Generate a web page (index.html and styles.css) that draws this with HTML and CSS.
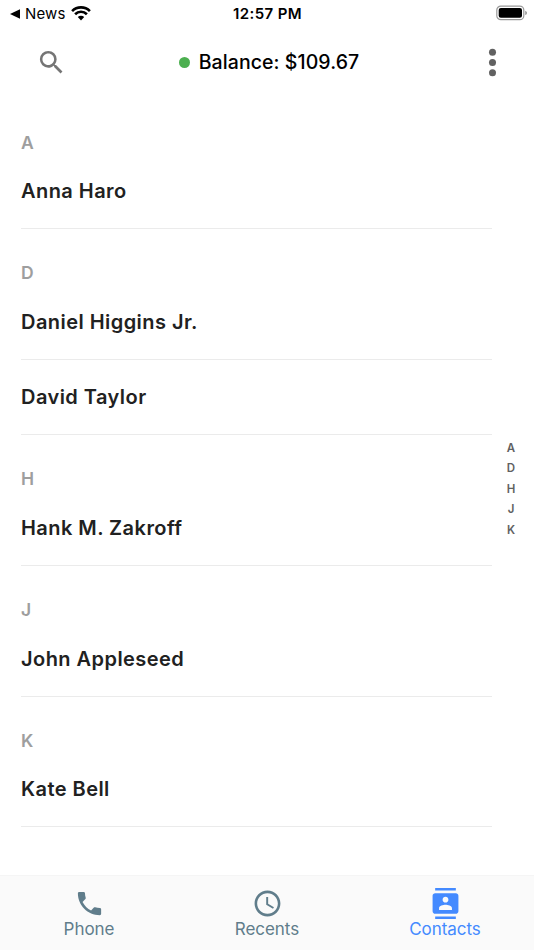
FILE: index.html
```html
<!DOCTYPE html>
<html lang="en">
<head>
<meta charset="utf-8">
<title>Contacts</title>
<link rel="stylesheet" href="styles.css">
</head>
<body>
<div class="app">
  <div class="status">
    <div class="status-left">
      <svg class="back" viewBox="0 0 10 10"><path d="M0 5 10 .3v9.4z"/></svg>
      <span class="news">News</span>
      <svg class="wifi" viewBox="0 0 20 15"><path d="M10 14.4 6.8 11.1a4.6 4.6 0 0 1 6.4 0z"/><path class="arc" d="M4.1 8.2a8.4 8.4 0 0 1 11.8 0M1.1 5.1a12.6 12.6 0 0 1 17.8 0"/></svg>
    </div>
    <span class="time">12:57 PM</span>
    <svg class="battery" viewBox="0 0 32 16"><rect class="shell" x=".8" y="1.1" width="27" height="13.6" rx="4"/><rect x="2.7" y="3" width="23.3" height="9.8" rx="2.1"/><path class="cap" d="M29.2 5.7c2.4.8 2.4 3.6 0 4.4z"/></svg>
  </div>
  <header class="top">
    <svg class="search" viewBox="0 0 24 24"><path d="M15.5 14h-.79l-.28-.27A6.471 6.471 0 0 0 16 9.5 6.5 6.5 0 1 0 9.5 16c1.61 0 3.09-.59 4.23-1.57l.27.28v.79l5 4.99L20.49 19l-4.99-5zm-6 0C7.01 14 5 11.99 5 9.5S7.01 5 9.5 5 14 7.01 14 9.5 11.99 14 9.5 14z"/></svg>
    <div class="balance"><i class="dot"></i><span class="amount">Balance: $109.67</span></div>
    <svg class="more" viewBox="0 0 24 24"><circle cx="12" cy="6" r="2.05"/><circle cx="12" cy="12" r="2.05"/><circle cx="12" cy="18" r="2.05"/></svg>
  </header>
  <main class="body">
    <div class="list">
      <section><h2>A</h2><div class="row"><span>Anna Haro</span></div></section>
      <section><h2>D</h2><div class="row"><span>Daniel Higgins Jr.</span></div><div class="row"><span>David Taylor</span></div></section>
      <section><h2>H</h2><div class="row"><span>Hank M. Zakroff</span></div></section>
      <section><h2>J</h2><div class="row"><span>John Appleseed</span></div></section>
      <section><h2>K</h2><div class="row"><span>Kate Bell</span></div></section>
    </div>
    <nav class="index"><span>A</span><span>D</span><span>H</span><span>J</span><span>K</span></nav>
  </main>
  <footer class="tabs">
    <div class="tab"><svg viewBox="0 0 24 24"><path d="M6.62 10.79c1.44 2.83 3.76 5.14 6.59 6.59l2.2-2.2c.27-.27.67-.36 1.02-.24 1.12.37 2.33.57 3.57.57.55 0 1 .45 1 1V20c0 .55-.45 1-1 1-9.39 0-17-7.61-17-17 0-.55.45-1 1-1h3.5c.55 0 1 .45 1 1 0 1.25.2 2.45.57 3.57.11.35.03.74-.25 1.02l-2.2 2.2z"/></svg><span>Phone</span></div>
    <div class="tab"><svg viewBox="0 0 24 24"><path d="M11.99 2C6.47 2 2 6.48 2 12s4.47 10 9.99 10C17.52 22 22 17.52 22 12S17.52 2 11.99 2zM12 20c-4.42 0-8-3.58-8-8s3.58-8 8-8 8 3.58 8 8-3.58 8-8 8zm.5-13H11v6l5.25 3.15.75-1.23-4.5-2.67z"/></svg><span>Recents</span></div>
    <div class="tab active"><svg viewBox="0 0 24 24"><path d="M20 0H4v2h16V0zM4 24h16v-2H4v2zM20 4H4c-1.1 0-2 .9-2 2v12c0 1.1.9 2 2 2h16c1.1 0 2-.9 2-2V6c0-1.1-.9-2-2-2zm-8 2.75c1.24 0 2.25 1.01 2.25 2.25s-1.01 2.25-2.25 2.25S9.75 10.24 9.75 9 10.76 6.75 12 6.75zM17 17H7v-1.5c0-1.67 3.33-2.5 5-2.5s5 .83 5 2.5V17z"/></svg><span>Contacts</span></div>
  </footer>
</div>
</body>
</html>
```
FILE: styles.css
```css
* { box-sizing: border-box; }
body { margin: 0; background: #fff; font-family: Inter, "Liberation Sans", sans-serif; color: #212121; }
svg { display: block; fill: currentColor; flex: none; }
.app { width: 534px; height: 950px; display: flex; flex-direction: column; overflow: hidden; }

.status { height: 28px; display: grid; grid-template-columns: 1fr auto 1fr; align-items: center; padding: 0 6px 0 10px; color: #000; }
.status-left { display: flex; align-items: center; }
.back { width: 10px; height: 10px; }
.news { font-size: 15px; line-height: 28px; margin-left: 5px; letter-spacing: .15px; }
.wifi { width: 20px; height: 15px; margin: -2px 0 0 5px; }
.arc { fill: none; stroke: #000; stroke-width: 2.6; }
.time { font-size: 15px; font-weight: 600; line-height: 28px; letter-spacing: .4px; margin-right: 3px; }
.battery { width: 32px; height: 16px; justify-self: end; margin-top: -2px; }
.shell { fill: none; stroke: #999; stroke-width: 1.2; }
.cap { fill: #999; }

.top { height: 70px; display: grid; grid-template-columns: 1fr auto 1fr; align-items: start; padding: 0 21px 0 36px; }
.search { width: 31px; height: 31px; margin-top: 18.5px; color: #757575; }
.balance { display: flex; align-items: center; height: 68px; margin-right: 11px; color: #000; }
.dot { width: 11px; height: 11px; border-radius: 50%; background: #4caf50; margin-right: 9px; }
.amount { font-size: 19.5px; font-weight: 450; letter-spacing: .08px; }
.more { width: 41px; height: 41px; margin-top: 13.5px; justify-self: end; color: #616161; }

.body { height: 777px; display: flex; }
.list { width: 471px; margin-left: 21px; padding-top: .5px; }
h2 { margin: 0; height: 55.3px; padding: 31px 0 0; font-size: 17.5px; line-height: 25px; font-weight: 600; color: #9e9e9e; }
.row { height: 75.4px; padding-top: .6px; display: flex; align-items: center; border-bottom: 1px solid #ebebeb; font-size: 20px; font-weight: 580; letter-spacing: .45px; }
.index { width: 38px; padding-top: 339.5px; display: flex; flex-direction: column; align-items: center; font-size: 11.5px; line-height: 20.6px; font-weight: 600; color: #616161; }

.tabs { height: 75px; background: #fafafa; border-top: 1px solid #f5f5f5; display: grid; grid-template-columns: repeat(3, 1fr); color: #607d8b; }
.tab { display: flex; flex-direction: column; align-items: center; padding-top: 11.5px; font-size: 17px; line-height: 20px; letter-spacing: -.05px; }
.tab svg { width: 31px; height: 31px; }
.active { color: #448aff; }
```
